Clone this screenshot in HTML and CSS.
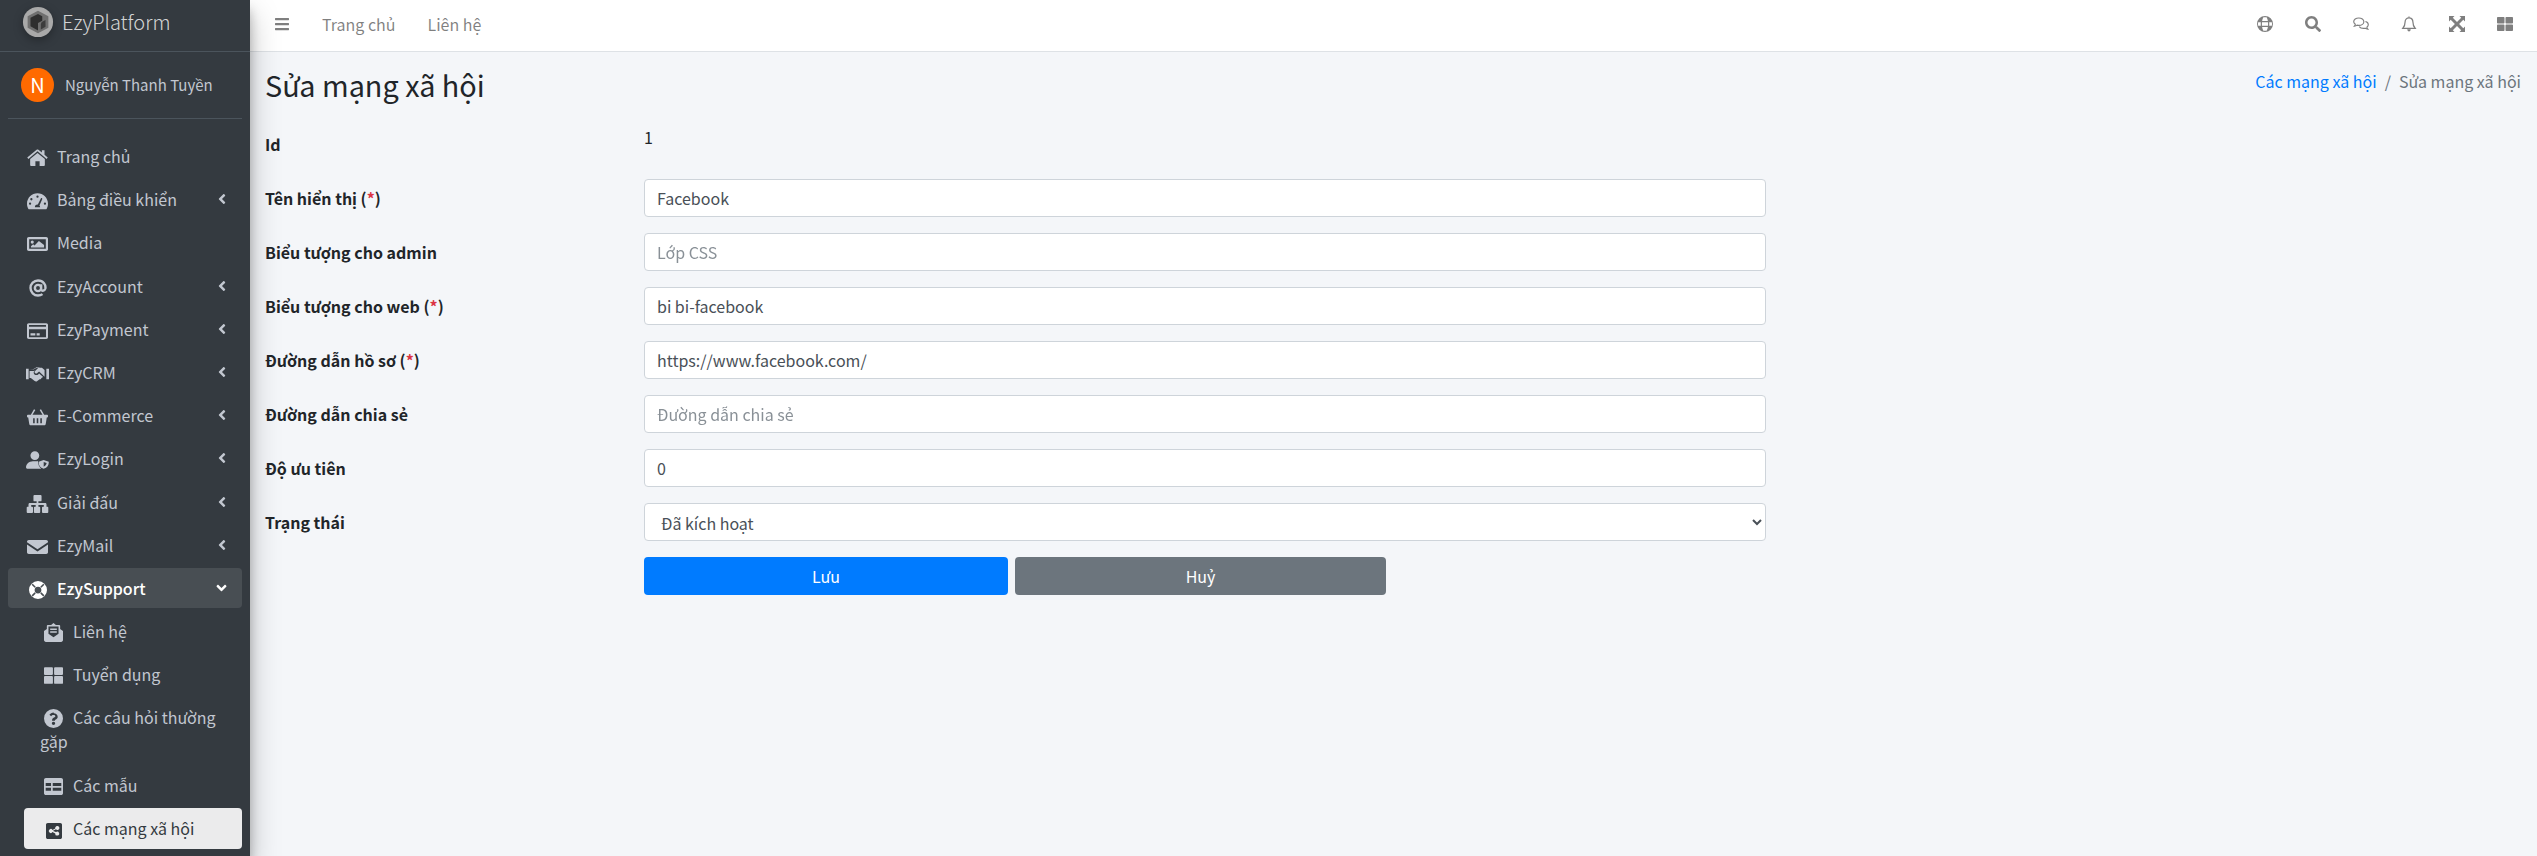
FILE: index.html
```html
<!doctype html>
<html lang="vi">
  <head>
    <meta charset="UTF-8" />
    <meta name="viewport" content="width=device-width, initial-scale=1.0" />
    <title>Sửa mạng xã hội</title>
    <link rel="stylesheet" href="styles.css">
  </head>

  <body>
    <svg class="icon-defs" aria-hidden="true">
      <symbol id="i-home" viewBox="0 0 24 20"><path d="M12 4.2 3.6 11.2V18c0 .6.4 1 1 1h5v-5.4h4.8V19h5c.6 0 1-.4 1-1v-6.8zM23.7 9.4 20 6.3V1h-3v2.8L13 .6c-.6-.5-1.4-.5-2 0L.3 9.4l1.3 1.6L12 2.4 22.4 11z"/></symbol>
      <symbol id="i-gauge" viewBox="0 0 24 20"><path fill-rule="evenodd" d="M12 1C5.4 1 0 6.300 0 13c0 2.200.6 4.200 1.600 6 .2.300.6.500 1 .500h18.800c.4 0 .8-.2 1-.5 1-1.800 1.600-3.800 1.600-6C24 6.300 18.600 1 12 1zm0 2.700a1.300 1.300 0 1 1 0 2.600 1.300 1.300 0 0 1 0-2.600zM5 6.700a1.300 1.300 0 1 1 0 2.600 1.300 1.300 0 0 1 0-2.600zM3.500 14.300a1.300 1.300 0 1 1 0-2.600 1.300 1.300 0 0 1 0 2.600zm17 0a1.300 1.300 0 1 1 0-2.600 1.300 1.300 0 0 1 0 2.600zm-3-6.500-3.300 7.400c.5.400.8 1 .8 1.800H9a3 3 0 0 1 3-3h.4l3.400-7c.2-.4.600-.5 1-.4.600.200.800.700.700 1.200z"/></symbol>
      <symbol id="i-image" viewBox="0 0 24 20"><path fill-rule="evenodd" d="M2 2h20c1 0 2 .8 2 2v12c0 1.200-1 2-2 2H2c-1 0-2-.8-2-2V4c0-1.200 1-2 2-2zm.500 2.500v11h19v-11zM6 6a1.800 1.800 0 1 1 0 3.600A1.800 1.800 0 0 1 6 6zM4.500 14v-1.500L7 10.200l1.600 1.500 5-5L19.500 11v3z"/></symbol>
      <symbol id="i-at" viewBox="0 0 24 24"><path fill="none" stroke="currentColor" stroke-width="3.200" d="M16.200 12a4.200 4.200 0 1 1-8.400 0 4.200 4.200 0 0 1 8.400 0zm0-5v6.500c0 3 4.500 3 5.500-.5 1.200-5-2.500-11-9.700-11C6.500 2 2 6.500 2 12s4.500 10 10 10c2.500 0 4.500-.7 6-1.800"/></symbol>
      <symbol id="i-card" viewBox="0 0 24 20"><path fill-rule="evenodd" d="M2 1h20c1.100 0 2 .9 2 2v14c0 1.100-.9 2-2 2H2c-1.100 0-2-.9-2-2V3c0-1.100.9-2 2-2zm.3 2v2h19.400V3zm0 5v9h19.400V8zM4 12.500h5.500V15H4zm7 0h3.500V15H11z"/></symbol>
      <symbol id="i-hands" viewBox="0 0 26 20"><path d="M0 4h3v12H0zM23 4h3v12h-3zM4 5h4.500L11 3.500c1-.5 2-.7 3-.5l-4 4c-.6.800-.3 1.800.5 2.200.8.500 1.700.3 2.300-.3l2-1.800 6.200 6V5.500l-3-2.500h-2c-1.500-.500-3.500-.800-5 0L8 4.500zM4 6.500V14.500h1.500l4.300 3.500c1 .8 2.300.6 3-.2l2.600-2c1 .2 1.900-.5 2-1.400.8 0 1.500-.5 1.700-1.300L14.800 9.500l-1 1c-1.300 1-3 1-4.200 0-1.200-1.200-1.200-3 0-4.200L10 5.800 8.800 6.500z"/></symbol>
      <symbol id="i-basket" viewBox="0 0 24 20"><path fill-rule="evenodd" d="M8 1.200 9.500 2 6.300 7.500h11.400L14.500 2 16 1.200 19.600 7.500H23c.6 0 1 .4 1 1v1c0 .6-.4 1-1 1h-.4l-1.200 7.500c-.1.900-.9 1.500-1.700 1.500H4.300c-.8 0-1.600-.6-1.700-1.500L1.400 10.500H1c-.6 0-1-.4-1-1v-1c0-.6.4-1 1-1h3.400zM7 11.500v5.500h1.800v-5.500zm4.100 0v5.500h1.800v-5.500zm4.100 0v5.500H17v-5.500z"/></symbol>
      <symbol id="i-usershield" viewBox="0 0 26 20"><path d="M10 10A5 5 0 1 0 10 0a5 5 0 0 0 0 10zM15 10.800c-.4 0-.9.200-1.500.4-.5.200-.8.200-1.300.2H7.800C3.500 11.400 0 14.600 0 18.300c0 1 .8 1.700 1.700 1.700h15.500c-2.300-1.800-3.700-5-3.700-8.200 0-.3.300-.7.400-1zM20 10l5.800 2c.1 3.800-1.700 6.800-5.800 8-4.100-1.200-5.900-4.200-5.800-8zm0 2.400v5.200c1.800-1 3-2.200 3.300-4.200z"/></symbol>
      <symbol id="i-sitemap" viewBox="0 0 24 20"><path d="M8.500 0h7c.6 0 1 .4 1 1v5c0 .6-.4 1-1 1H13v2h7.500c1 0 1.500.7 1.500 1.500V13h1c.6 0 1 .4 1 1v5c0 .6-.4 1-1 1h-5c-.6 0-1-.4-1-1v-5c0-.6.400-1 1-1h1v-2h-6v2h1c.6 0 1 .4 1 1v5c0 .6-.4 1-1 1h-5c-.6 0-1-.4-1-1v-5c0-.6.400-1 1-1h1v-2H5v2h1c.6 0 1 .4 1 1v5c0 .6-.4 1-1 1H1c-.6 0-1-.4-1-1v-5c0-.6.400-1 1-1h1v-2.500C2 9.700 2.500 9 3.500 9H11V7H8.500c-.6 0-1-.4-1-1V1c0-.6.400-1 1-1z"/></symbol>
      <symbol id="i-mail" viewBox="0 0 24 20"><path d="M2 2h20c1 0 2 .8 2 2v.5l-12 8-12-8V4c0-1.200 1-2 2-2zM0 7v9c0 1.200 1 2 2 2h20c1 0 2-.8 2-2V7l-12 8z"/></symbol>
      <symbol id="i-support" viewBox="0 0 24 24"><path fill-rule="evenodd" d="M12 0a12 12 0 1 1 0 24 12 12 0 0 1 0-24zm0 7.500a4.500 4.500 0 1 0 0 9 4.500 4.500 0 0 0 0-9zM5 3.500 3.500 5l4 4a6 6 0 0 1 1.500-1.500zm14 0-4 4A6 6 0 0 1 16.500 9l4-4zM7.500 15l-4 4L5 20.500l4-4A6 6 0 0 1 7.500 15zm9 0a6 6 0 0 1-1.500 1.500l4 4 1.500-1.500z"/></symbol>
      <symbol id="i-mailopen" viewBox="0 0 20 20"><path fill-rule="evenodd" d="M10 0l2.500 2H16c.6 0 1 .4 1 1v3.200l3 2.300V18c0 1.100-.9 2-2 2H2c-1.100 0-2-.9-2-2V8.500l3-2.300V3c0-.6.400-1 1-1h3.500zM4.700 3.700v7.500L10 15l5.300-3.800V3.700zM6.500 5.800h7v1.500h-7zm0 3h7v1.500h-7z"/></symbol>
      <symbol id="i-thlarge" viewBox="0 0 512 512"><path d="M296 32h192c13.255 0 24 10.745 24 24v160c0 13.255-10.745 24-24 24H296c-13.255 0-24-10.745-24-24V56c0-13.255 10.745-24 24-24zm-80 0H24C10.745 32 0 42.745 0 56v160c0 13.255 10.745 24 24 24h192c13.255 0 24-10.745 24-24V56c0-13.255-10.745-24-24-24zM0 296v160c0 13.255 10.745 24 24 24h192c13.255 0 24-10.745 24-24V296c0-13.255-10.745-24-24-24H24c-13.255 0-24 10.745-24 24zm296 184h192c13.255 0 24-10.745 24-24V296c0-13.255-10.745-24-24-24H296c-13.255 0-24 10.745-24 24v160c0 13.255 10.745 24 24 24z"/></symbol>
      <symbol id="i-question" viewBox="0 0 20 20"><path fill-rule="evenodd" d="M10 0a10 10 0 1 1 0 20 10 10 0 0 1 0-20zm0 13.300a1.800 1.800 0 1 0 0 3.600 1.800 1.800 0 0 0 0-3.600zM10.300 3.600c-2.200 0-3.600 1-4.600 2.500l1.800 1.400c.6-.8 1.200-1.300 2.500-1.300 1 0 1.900.5 1.900 1.300 0 .7-.5 1-1.400 1.500-1 .6-2 1.200-2 3v.4h3v-.3c0-1 2.900-1.100 2.900-3.900 0-2.300-2-3.600-4.100-3.600z"/></symbol>
      <symbol id="i-table" viewBox="0 0 20 18"><path fill-rule="evenodd" d="M2 0h16c1.100 0 2 .9 2 2v14c0 1.100-.9 2-2 2H2c-1.100 0-2-.9-2-2V2C0 .9.900 0 2 0zm-.2 5.200v3.400h5.600V5.200zm7.400 0v3.400h9V5.200zm-7.400 5v3.300h5.600v-3.300zm7.400 0v3.300h9v-3.300z"/></symbol>
      <symbol id="i-share" viewBox="0 0 18 18"><path fill-rule="evenodd" d="M2 0h14c1.100 0 2 .9 2 2v14c0 1.100-.9 2-2 2H2c-1.100 0-2-.9-2-2V2C0 .9.900 0 2 0zm10.500 3.500a2.200 2.200 0 0 0-2.100 2.800L7.300 7.900a2.200 2.200 0 1 0 0 2.200l3.100 1.600a2.200 2.200 0 1 0 .8-1.500L8 8.900V8.800l3.200-1.700a2.200 2.200 0 1 0 1.300-3.600z"/></symbol>
      <symbol id="i-bars" viewBox="0 0 448 512"><path d="M16 132h416c8.837 0 16-7.163 16-16V76c0-8.837-7.163-16-16-16H16C7.163 60 0 67.163 0 76v40c0 8.837 7.163 16 16 16zm0 160h416c8.837 0 16-7.163 16-16v-40c0-8.837-7.163-16-16-16H16c-8.837 0-16 7.163-16 16v40c0 8.837 7.163 16 16 16zm0 160h416c8.837 0 16-7.163 16-16v-40c0-8.837-7.163-16-16-16H16c-8.837 0-16 7.163-16 16v40c0 8.837 7.163 16 16 16z"/></symbol>
      <symbol id="i-globe" viewBox="0 0 16 16"><path fill-rule="evenodd" d="M8 0a8 8 0 1 1 0 16A8 8 0 0 1 8 0zM6.400 1.300C5.800 2.300 5.300 3.700 5.100 5h5.800c-.2-1.300-.7-2.700-1.300-3.700zM5 6.200c-.1 1.100-.1 2.500 0 3.600h6c.1-1.100.1-2.500 0-3.600zm.1 4.800c.2 1.300.7 2.700 1.300 3.700h3.200c.6-1 1.100-2.400 1.300-3.700zM1.200 6.200c-.3 1.100-.3 2.500 0 3.600h2.600c-.1-1.100-.1-2.500 0-3.600zm11 0c.1 1.100.1 2.500 0 3.600h2.600c.3-1.100.3-2.500 0-3.600z"/></symbol>
      <symbol id="i-search" viewBox="0 0 512 512"><path d="M505 442.700L405.300 343c-4.500-4.500-10.600-7-17-7H372c27.600-35.300 44-79.700 44-128C416 93.100 322.900 0 208 0S0 93.100 0 208s93.100 208 208 208c48.300 0 92.700-16.400 128-44v16.300c0 6.400 2.500 12.500 7 17l99.700 99.700c9.400 9.400 24.600 9.400 33.900 0l28.300-28.300c9.400-9.400 9.400-24.600.1-34zM208 336c-70.700 0-128-57.200-128-128 0-70.700 57.200-128 128-128 70.700 0 128 57.200 128 128 0 70.700-57.200 128-128 128z"/></symbol>
      <symbol id="i-comments" viewBox="0 0 18 16"><path fill="none" stroke="currentColor" stroke-width="1.300" d="M6.500 1.200c3.200 0 5.700 1.900 5.700 4.200s-2.500 4.200-5.700 4.200c-.7 0-1.300-.1-1.900-.3C3.800 10 2.700 10.400 1.500 10.400c.7-.7 1.100-1.400 1.100-2.100C1.500 7.500.8 6.500.8 5.400c0-2.300 2.500-4.200 5.700-4.200zM14 5.200c1.900.5 3.200 1.900 3.200 3.600 0 1.100-.6 2-1.600 2.800 0 .8.400 1.500 1.100 2.200-1.200 0-2.300-.4-3.100-1.100-.6.200-1.200.3-1.900.3-2 0-3.800-.8-4.700-2.100"/></symbol>
      <symbol id="i-bell" viewBox="0 0 16 18"><path fill="none" stroke="currentColor" stroke-width="1.400" d="M8 2C5.300 2 3.600 4.200 3.600 6.800c0 3.400-.8 5-2.500 7h13.800c-1.700-2-2.500-3.600-2.500-7C12.400 4.200 10.700 2 8 2zM8 .5V2"/><path d="M6 15h4c0 1.200-.9 2.400-2 2.400S6 16.200 6 15z"/></symbol>
      <symbol id="i-expand" viewBox="0 0 16 16"><path d="M0 0h5.500L3.800 1.700 8 5.900 12.200 1.700 10.500 0H16v5.500l-1.700-1.700L10.100 8l4.200 4.200 1.700-1.700V16h-5.500l1.700-1.700L8 10.100l-4.200 4.200L5.500 16H0v-5.500l1.700 1.700L5.900 8 1.700 3.800 0 5.500z"/></symbol>
      <symbol id="i-left" viewBox="0 0 256 512"><path d="M31.700 239l136-136c9.400-9.400 24.600-9.400 33.900 0l22.600 22.600c9.400 9.400 9.400 24.600 0 33.900L127.900 256l96.400 96.400c9.400 9.400 9.400 24.600 0 33.900L201.700 409c-9.400 9.400-24.600 9.400-33.900 0l-136-136c-9.500-9.400-9.500-24.600-.1-34z"/></symbol>
      <symbol id="i-down" viewBox="0 0 320 512"><path d="M143 352.300L7 216.300c-9.400-9.400-9.400-24.600 0-33.900l22.600-22.600c9.400-9.400 24.600-9.400 33.900 0l96.400 96.400 96.400-96.400c9.400-9.400 24.600-9.400 33.900 0l22.600 22.600c9.400 9.400 9.400 24.600 0 33.900l-136 136c-9.200 9.400-24.400 9.400-33.800 0z"/></symbol>
    </svg>

    <aside class="sidebar">
      <a class="brand" href="#">
        <svg class="brand-logo" viewBox="0 0 34 34">
          <circle cx="17" cy="17" r="16" fill="#a9a9a9" />
          <path d="M17 5l11 6v12l-11 6-11-6V11z" fill="#6f6f6f" />
          <path d="M9 12.500l8-4 4.500 2.300v5L17 18v8l-8-4.500z" fill="#2e2e2e" />
          <path d="M21 17l4-2v7l-5 3v-6z" fill="#3c3c3c" />
        </svg>
        <span class="brand-text">EzyPlatform</span>
      </a>

      <div class="user-panel">
        <span class="avatar">N</span>
        <a class="user-name" href="#">Nguyễn Thanh Tuyền</a>
      </div>

      <nav>
        <ul class="nav-list">
          <li><a class="nav-link" href="#"><span class="nav-icon"><svg class="ico-home"><use href="#i-home" /></svg></span>Trang chủ</a></li>
          <li><a class="nav-link" href="#"><span class="nav-icon"><svg class="ico-home"><use href="#i-gauge" /></svg></span>Bảng điều khiển<svg class="nav-angle"><use href="#i-left" /></svg></a></li>
          <li><a class="nav-link" href="#"><span class="nav-icon"><svg class="ico-home"><use href="#i-image" /></svg></span>Media</a></li>
          <li><a class="nav-link" href="#"><span class="nav-icon"><svg class="ico-at"><use href="#i-at" /></svg></span>EzyAccount<svg class="nav-angle"><use href="#i-left" /></svg></a></li>
          <li><a class="nav-link" href="#"><span class="nav-icon"><svg class="ico-home"><use href="#i-card" /></svg></span>EzyPayment<svg class="nav-angle"><use href="#i-left" /></svg></a></li>
          <li><a class="nav-link" href="#"><span class="nav-icon"><svg class="ico-wide"><use href="#i-hands" /></svg></span>EzyCRM<svg class="nav-angle"><use href="#i-left" /></svg></a></li>
          <li><a class="nav-link" href="#"><span class="nav-icon"><svg class="ico-home"><use href="#i-basket" /></svg></span>E-Commerce<svg class="nav-angle"><use href="#i-left" /></svg></a></li>
          <li><a class="nav-link" href="#"><span class="nav-icon"><svg class="ico-wide"><use href="#i-usershield" /></svg></span>EzyLogin<svg class="nav-angle"><use href="#i-left" /></svg></a></li>
          <li><a class="nav-link" href="#"><span class="nav-icon"><svg class="ico-wide"><use href="#i-sitemap" /></svg></span>Giải đấu<svg class="nav-angle"><use href="#i-left" /></svg></a></li>
          <li><a class="nav-link" href="#"><span class="nav-icon"><svg class="ico-home"><use href="#i-mail" /></svg></span>EzyMail<svg class="nav-angle"><use href="#i-left" /></svg></a></li>
          <li>
            <a class="nav-link open" href="#"><span class="nav-icon"><svg class="ico-at"><use href="#i-support" /></svg></span>EzySupport<svg class="nav-down"><use href="#i-down" /></svg></a>
            <ul class="nav-list sub-list">
              <li><a class="nav-link" href="#"><span class="nav-icon"><svg class="ico-sub"><use href="#i-mailopen" /></svg></span>Liên hệ</a></li>
              <li><a class="nav-link" href="#"><span class="nav-icon"><svg class="ico-sub"><use href="#i-thlarge" /></svg></span>Tuyển dụng</a></li>
              <li><a class="nav-link" href="#"><span class="nav-icon"><svg class="ico-sub"><use href="#i-question" /></svg></span>Các câu hỏi thường gặp</a></li>
              <li><a class="nav-link" href="#"><span class="nav-icon"><svg class="ico-sub"><use href="#i-table" /></svg></span>Các mẫu</a></li>
              <li><a class="nav-link active" href="#"><span class="nav-icon"><svg class="ico-share"><use href="#i-share" /></svg></span>Các mạng xã hội</a></li>
            </ul>
          </li>
        </ul>
      </nav>
    </aside>

    <div class="main">
      <header class="navbar">
        <ul class="navbar-links">
          <li><a class="navbar-link" href="#"><svg class="tool-icon"><use href="#i-bars" /></svg></a></li>
          <li><a class="navbar-link" href="#">Trang chủ</a></li>
          <li><a class="navbar-link" href="#">Liên hệ</a></li>
        </ul>
        <ul class="navbar-links">
          <li><a class="navbar-link" href="#"><svg class="tool-icon"><use href="#i-globe" /></svg></a></li>
          <li><a class="navbar-link" href="#"><svg class="tool-icon"><use href="#i-search" /></svg></a></li>
          <li><a class="navbar-link" href="#"><svg class="tool-icon"><use href="#i-comments" /></svg></a></li>
          <li><a class="navbar-link" href="#"><svg class="tool-icon"><use href="#i-bell" /></svg></a></li>
          <li><a class="navbar-link" href="#"><svg class="tool-icon"><use href="#i-expand" /></svg></a></li>
          <li><a class="navbar-link" href="#"><svg class="tool-icon"><use href="#i-thlarge" /></svg></a></li>
        </ul>
      </header>

      <section class="content">
        <div class="content-header">
          <h1>Sửa mạng xã hội</h1>
          <ol class="breadcrumb">
            <li><a href="#">Các mạng xã hội</a></li>
            <li class="crumb-sep">/</li>
            <li>Sửa mạng xã hội</li>
          </ol>
        </div>

        <form class="edit-form">
          <label class="form-label">Id</label>
          <div class="form-value">1</div>

          <label class="form-label">Tên hiển thị (<span class="required">*</span>)</label>
          <input class="form-control" type="text" value="Facebook">

          <label class="form-label">Biểu tượng cho admin</label>
          <input class="form-control" type="text" placeholder="Lớp CSS">

          <label class="form-label">Biểu tượng cho web (<span class="required">*</span>)</label>
          <input class="form-control" type="text" value="bi bi-facebook">

          <label class="form-label">Đường dẫn hồ sơ (<span class="required">*</span>)</label>
          <input class="form-control" type="text" value="https://www.facebook.com/">

          <label class="form-label">Đường dẫn chia sẻ</label>
          <input class="form-control" type="text" placeholder="Đường dẫn chia sẻ">

          <label class="form-label">Độ ưu tiên</label>
          <input class="form-control" type="text" value="0">

          <label class="form-label">Trạng thái</label>
          <select class="form-control">
            <option>Đã kích hoạt</option>
          </select>

          <div class="form-actions">
            <button class="btn btn-primary" type="button">Lưu</button>
            <button class="btn btn-secondary" type="button">Huỷ</button>
          </div>
        </form>
      </section>
    </div>
  </body>
</html>
```

FILE: styles.css
```css
:root {
  --sidebar-bg: #343a40;
  --sidebar-line: #4b545c;
  --sidebar-text: #c2c7d0;
  --content-bg: #f4f6f9;
  --border-color: #ced4da;
  --primary: #007bff;
  --secondary: #6c757d;
  --text-color: #212529;
  --input-text: #495057;
  --muted: rgba(0, 0, 0, 0.5);
}

* {
  margin: 0;
  padding: 0;
  box-sizing: border-box;
}

body {
  display: flex;
  height: 100vh;
  overflow: hidden;
  background-color: var(--content-bg);
  color: var(--text-color);
  font-family: 'Noto Sans CJK SC', 'Noto Sans', sans-serif;
  font-size: 16px;
  line-height: 24px;
}

a {
  color: inherit;
  text-decoration: none;
}

ul,
ol {
  list-style: none;
}

.icon-defs {
  display: none;
}

svg {
  fill: currentColor;
}

/* sidebar */
.sidebar {
  flex: 0 0 250px;
  height: 100vh;
  overflow: hidden;
  position: relative;
  z-index: 2;
  background-color: var(--sidebar-bg);
  box-shadow: 0 14px 28px rgba(0, 0, 0, 0.25), 0 10px 10px rgba(0, 0, 0, 0.22);
}

.brand {
  display: flex;
  align-items: center;
  height: 52px;
  padding: 0 0 7px 22px;
  border-bottom: 1px solid var(--sidebar-line);
}

.brand-logo {
  width: 32px;
  height: 32px;
  margin-right: 8px;
  filter: drop-shadow(0 3px 5px rgba(0, 0, 0, 0.3));
}

.brand-text {
  font-size: 20px;
  font-weight: 300;
  color: rgba(255, 255, 255, 0.8);
}

.user-panel {
  display: flex;
  align-items: center;
  height: 67px;
  margin: 0 8px 17px;
  padding: 0 0 1px 13px;
  border-bottom: 1px solid var(--sidebar-line);
}

.avatar {
  display: flex;
  align-items: center;
  justify-content: center;
  width: 33px;
  height: 34px;
  margin-right: 11px;
  border-radius: 50%;
  background-color: #ff6a00;
  color: #fff;
  font-size: 20px;
}

.user-name {
  font-size: 15px;
  color: var(--sidebar-text);
}

.nav-list {
  padding: 0 8px;
}

.nav-link {
  display: block;
  position: relative;
  margin-bottom: 3.2px;
  padding: 8px 16px;
  border-radius: 4px;
  color: var(--sidebar-text);
}

.nav-icon {
  display: inline-flex;
  align-items: center;
  width: 33px;
  height: 20px;
  vertical-align: -4px;
}

.ico-home {
  width: 21px;
  height: 18px;
  margin-left: 3px;
}

.ico-at {
  width: 18px;
  height: 18px;
  margin-left: 5px;
}

.ico-wide {
  width: 23px;
  height: 18px;
  margin-left: 2px;
}

.ico-sub {
  width: 19px;
  height: 19px;
  margin-left: 4px;
}

.ico-share {
  width: 16px;
  height: 16px;
  margin-left: 6px;
}

.nav-angle {
  position: absolute;
  top: 12px;
  right: 16px;
  width: 8px;
  height: 16px;
}

.nav-down {
  position: absolute;
  top: 12px;
  right: 15px;
  width: 11px;
  height: 16px;
}

.nav-link.open {
  background-color: rgba(255, 255, 255, 0.1);
  color: #fff;
  font-weight: 500;
}

.sub-list {
  padding: 0 0 0 16px;
}

.nav-link.active {
  background-color: rgba(255, 255, 255, 0.9);
  color: var(--sidebar-bg);
}

/* top bar */
.main {
  flex: 1;
  min-width: 0;
}

.navbar {
  display: flex;
  justify-content: space-between;
  height: 52px;
  padding: 4px 8px;
  background-color: #fff;
  border-bottom: 1px solid #dee2e6;
}

.navbar-links {
  display: flex;
}

.navbar-link {
  display: flex;
  align-items: center;
  height: 40px;
  padding: 0 16px;
  color: var(--muted);
}

.tool-icon {
  width: 16px;
  height: 16px;
}

/* content */
.content {
  padding: 15px 16px 0 15px;
}

.content-header {
  display: flex;
  justify-content: space-between;
  margin-bottom: 23px;
}

h1 {
  font-size: 28.8px;
  font-weight: 400;
  line-height: 35px;
}

.breadcrumb {
  display: flex;
  margin-top: 2px;
  color: var(--secondary);
}

.breadcrumb a {
  color: var(--primary);
}

.crumb-sep {
  padding: 0 8px;
}

.edit-form {
  display: grid;
  grid-template-columns: 379px 1122px;
  row-gap: 16px;
}

.form-label {
  padding: 7px 0;
  font-weight: 700;
  line-height: 24px;
}

.required {
  color: #dc3545;
}

.form-control {
  width: 100%;
  height: 38px;
  padding: 6px 12px;
  border: 1px solid var(--border-color);
  border-radius: 4px;
  background-color: #fff;
  color: var(--input-text);
  font: inherit;
}

.form-control::placeholder {
  color: #6c757d;
  opacity: 0.8;
}

.form-actions {
  grid-column: 2;
  display: grid;
  grid-template-columns: 364px 371px;
  column-gap: 7px;
}

.btn {
  height: 38px;
  border: 1px solid transparent;
  border-radius: 4px;
  color: #fff;
  font: inherit;
}

.btn-primary {
  background-color: var(--primary);
}

.btn-secondary {
  background-color: var(--secondary);
}
```
